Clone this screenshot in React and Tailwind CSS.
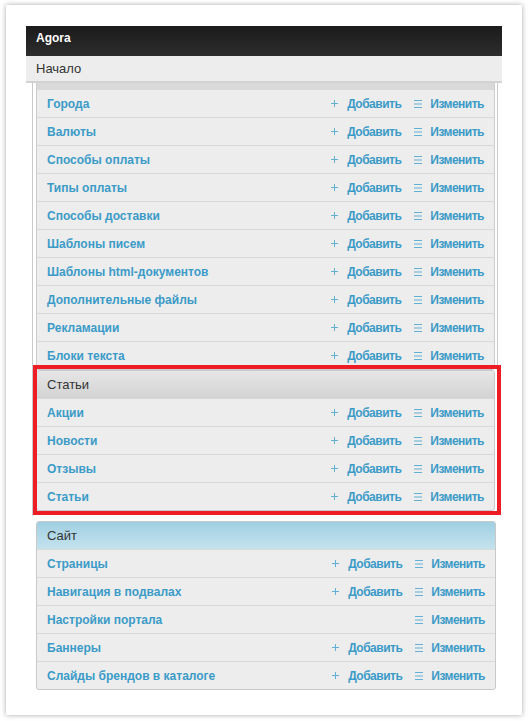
import React from "react";

const settings = [
  "Города",
  "Валюты",
  "Способы оплаты",
  "Типы оплаты",
  "Способы доставки",
  "Шаблоны писем",
  "Шаблоны html-документов",
  "Дополнительные файлы",
  "Рекламации",
  "Блоки текста",
];

const articles = ["Акции", "Новости", "Отзывы", "Статьи"];

const site = [
  { name: "Страницы" },
  { name: "Навигация в подвалах" },
  { name: "Настройки портала", noAdd: true },
  { name: "Баннеры" },
  { name: "Слайды брендов в каталоге" },
];

function PlusIcon() {
  return (
    <svg width="7" height="7" viewBox="0 0 7 7" className="shrink-0">
      <path d="M3.5 0v7M0 3.5h7" stroke="#62b1d4" strokeWidth="1" fill="none" />
    </svg>
  );
}

function ListIcon() {
  return (
    <svg width="8" height="8" viewBox="0 0 8 8" className="shrink-0">
      <path d="M0 0.5h8M0 4h8M0 7.5h8" stroke="#62b1d4" strokeWidth="1" fill="none" />
    </svg>
  );
}

function Row({ name, noAdd }) {
  return (
    <div className="flex h-[28px] items-center border-t border-[#d9d9d9] pl-[10px] pr-[10px]">
      <span className="flex-1 text-[12px] font-bold text-[#3b9bc8]">{name}</span>
      {!noAdd && (
        <span className="flex items-center">
          <PlusIcon />
          <span className="ml-[9px] text-[12px] tracking-[-0.5px] font-bold text-[#3b9bc8]">Добавить</span>
        </span>
      )}
      <span className="ml-[13px] flex items-center">
        <ListIcon />
        <span className="ml-[8px] text-[12px] tracking-[-0.5px] font-bold text-[#3b9bc8]">Изменить</span>
      </span>
    </div>
  );
}

export default function App() {
  return (
    <div className="min-h-[721px] bg-white pt-[5px] pl-[6px] font-['Liberation_Sans',Arial,sans-serif]">
      <div className="w-[516px] h-[710px] bg-white shadow-[0_0_5px_rgba(0,0,0,0.35)] pt-[21px] px-[20px]">
        {/* top bar */}
        <div className="h-[30px] pt-[4px] px-[10px] bg-gradient-to-b from-[#1b1b1b] to-[#2d2d2d]">
          <span className="block text-[12px] leading-[16px] font-bold text-white">Agora</span>
        </div>
        <div className="h-[27px] flex items-center px-[10px] bg-[#ededed] border-b-2 border-[#d2d2d2]">
          <span className="text-[13px] text-[#333]">Начало</span>
        </div>

        <div className="ml-[6px] w-[466px] border-x border-[#c9c9c9] pl-[3px] pr-[2px] pb-[4px]">
          {/* settings panel, its header is scrolled under the bar */}
          <div className="border-x border-b border-[#cdcdcd] rounded-b-[3px] bg-[#ededed]">
            <div className="h-[6px] bg-[#d9d9d9]" />
            {settings.map((s) => (
              <Row key={s} name={s} />
            ))}
          </div>

          {/* articles panel */}
          <div className="relative">
            <div className="border border-[#c9c9c9] rounded-[3px] bg-[#ededed] overflow-hidden">
              <div className="h-[27px] flex items-center px-[10px] bg-gradient-to-b from-[#e6e6e6] to-[#d3d3d3]">
                <span className="text-[13px] text-[#333]">Статьи</span>
              </div>
              {articles.map((s) => (
                <Row key={s} name={s} />
              ))}
            </div>
            <div className="absolute -left-[3px] -top-[5px] -right-[6px] -bottom-[4px] border-4 border-[#ee1c24]" />
          </div>
        </div>

        {/* site panel */}
        <div className="ml-[10px] mt-[6px] w-[460px] border border-[#c9c9c9] rounded-[3px] bg-[#ededed] overflow-hidden">
          <div className="h-[27px] flex items-center px-[10px] bg-gradient-to-b from-[#a0cfe2] to-[#c4e3ee]">
            <span className="text-[13px] text-[#333]">Сайт</span>
          </div>
          {site.map((s) => (
            <Row key={s.name} name={s.name} noAdd={s.noAdd} />
          ))}
        </div>
      </div>
    </div>
  );
}
